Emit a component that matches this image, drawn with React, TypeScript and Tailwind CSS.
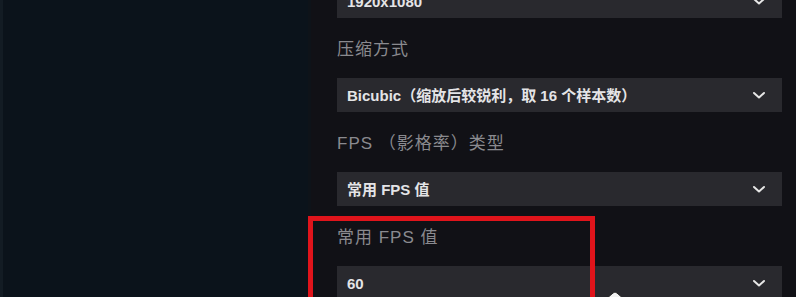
import React from "react";

const latin = "font-['Liberation_Sans','Noto_Sans_CJK_SC',sans-serif]";

function Chevron() {
  return (
    <svg width="14" height="9" viewBox="0 0 14 9" className="shrink-0">
      <path d="M2 2 L7 6.5 L12 2" fill="none" stroke="#e6e6e6" strokeWidth="2" strokeLinecap="round" strokeLinejoin="round" />
    </svg>
  );
}

function Select({ value }: { value: string }) {
  return (
    <div className="h-[34px] w-[445px] bg-[#29292e] flex items-center justify-between pl-[10px] pr-[16px]">
      <span className={`${latin} text-[15px] font-bold text-[#e4e4e6] leading-none`}>{value}</span>
      <Chevron />
    </div>
  );
}

function Label({ text }: { text: string }) {
  return (
    <div className={`${latin} h-[24px] flex items-center text-[17px] tracking-[1px] text-[#8a8a8f] mt-[20px] mb-[16px]`}>
      {text}
    </div>
  );
}

export default function App() {
  return (
    <div className="w-[796px] h-[297px] overflow-hidden flex bg-[#111116] relative">
      <div className="w-[3px] h-full bg-[#131c24]" />
      <div className="w-[305px] h-full bg-[#0b131b]" />
      <div className="w-[3px] h-full bg-[#0e1319]" />
      <div className="flex-1 relative pl-[26px]">
        <div className="flex flex-col mt-[-16px]">
          <Select value="1920x1080" />
          <Label text="压缩方式" />
          <Select value="Bicubic（缩放后较锐利，取 16 个样本数）" />
          <Label text="FPS （影格率）类型" />
          <Select value="常用 FPS 值" />
          <Label text="常用 FPS 值" />
          <Select value="60" />
        </div>
      </div>
      <div className="absolute left-[308px] top-[216px] w-[287px] h-[120px] border-[5px] border-[#e0141b] pointer-events-none" />
      <svg className="absolute left-[604px] top-[290px]" width="22" height="10" viewBox="0 0 22 10">
        <path d="M1 10 L9 3 Q11 1 13 3 L21 10 Z" fill="#f2f2f2" stroke="#222" strokeWidth="1" />
      </svg>
    </div>
  );
}
